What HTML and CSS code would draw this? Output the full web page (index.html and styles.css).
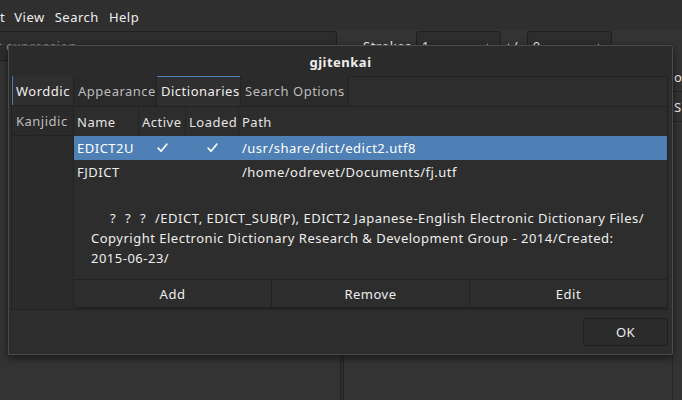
FILE: index.html
```html
<!DOCTYPE html>
<html>
<head>
<meta charset="utf-8">
<link rel="stylesheet" href="styles.css">
</head>
<body>
<div class="app">
  <div class="menubar">
    <span class="mi cut">Edit</span><span class="mi">View</span><span class="mi">Search</span><span class="mi">Help</span>
  </div>
  <div class="toolbar">
    <div class="entry">Enter expression</div>
    <div class="strokes">
      <span class="lbl">Strokes</span>
      <div class="spin"><span class="val">1</span><span class="sb">−</span><span class="sb">+</span></div>
      <span class="pm">+/-</span>
      <div class="spin"><span class="val">0</span><span class="sb">−</span><span class="sb">+</span></div>
    </div>
  </div>
  <div class="main">
    <div class="pane-left"></div>
    <div class="handle"></div>
    <div class="pane-right">
      <div class="side">
        <div class="srow">o</div>
        <div class="srow">S</div>
      </div>
    </div>
  </div>
</div>

<div class="dialog">
  <div class="titlebar">gjitenkai</div>
  <div class="dbody">
    <div class="outer">
      <div class="vtabs">
        <div class="vtab active">Worddic</div>
        <div class="vtab">Kanjidic</div>
        <div class="vfill"></div>
      </div>
      <div class="inner">
        <div class="htabs">
          <div class="htab t1">Appearance</div>
          <div class="htab t2 active">Dictionaries</div>
          <div class="htab t3">Search Options</div>
          <div class="hfill"></div>
        </div>
        <div class="page">
          <div class="thead">
            <div class="c name">Name</div>
            <div class="c act">Active</div>
            <div class="c load">Loaded</div>
            <div class="c path">Path</div>
          </div>
          <div class="trow sel">
            <div class="c name">EDICT2U</div>
            <div class="c act center"><svg class="chk" width="11" height="10" viewBox="0 0 11 10"><path d="M1.2 5.2 L4 8.2 L9.8 1.2" fill="none" stroke="#ffffff" stroke-width="1.7" stroke-linecap="round" stroke-linejoin="round"/></svg></div>
            <div class="c load center"><svg class="chk" width="11" height="10" viewBox="0 0 11 10"><path d="M1.2 5.2 L4 8.2 L9.8 1.2" fill="none" stroke="#ffffff" stroke-width="1.7" stroke-linecap="round" stroke-linejoin="round"/></svg></div>
            <div class="c path">/usr/share/dict/edict2.utf8</div>
          </div>
          <div class="trow">
            <div class="c name">FJDICT</div>
            <div class="c act"></div>
            <div class="c load"></div>
            <div class="c path">/home/odrevet/Documents/fj.utf</div>
          </div>
          <div class="desc">
            <div class="l1"><span class="q">?</span><span class="q">?</span><span class="q">?</span>/EDICT, EDICT_SUB(P), EDICT2 Japanese-English Electronic Dictionary Files/</div>
            <div>Copyright Electronic Dictionary Research &amp; Development Group - 2014/Created:</div>
            <div>2015-06-23/</div>
          </div>
          <div class="btns">
            <div class="btn">Add</div>
            <div class="btn">Remove</div>
            <div class="btn">Edit</div>
          </div>
        </div>
      </div>
    </div>
    <div class="actions">
      <div class="ok">OK</div>
    </div>
  </div>
</div>
</body>
</html>
```

FILE: styles.css
```css
* { box-sizing: border-box; }
html, body {
  margin: 0;
  padding: 0;
  width: 682px;
  height: 400px;
  overflow: hidden;
  background: #333333;
  font-family: "Noto Sans", "Open Sans", sans-serif;
  font-size: 13px;
  letter-spacing: 0.5px;
  color: #eeeeec;
}
.app {
  width: 682px;
  height: 400px;
  display: flex;
  flex-direction: column;
  overflow: hidden;
}
.menubar {
  height: 30px;
  display: flex;
  align-items: center;
  background: #2f2f2f;
  white-space: nowrap;
  padding-top: 3px;
}
.mi { padding: 0 5px; color: #eeeeec; }
.mi:nth-child(2) { padding-left: 4px; }
.mi.cut { margin-left: -25px; }
.toolbar {
  height: 32px;
  display: flex;
  align-items: flex-start;
  padding-top: 1px;
}
.entry {
  width: 379px;
  height: 30px;
  margin-left: -42px;
  padding: 0 8px;
  display: flex;
  align-items: center;
  background: #2d2d2d;
  border: 1px solid #1f1f1f;
  border-radius: 3px;
  color: #8a8a8a;
  white-space: nowrap;
}
.strokes {
  display: flex;
  align-items: center;
  margin-left: 26px;
  height: 30px;
}
.lbl { margin-right: 4px; color: #eeeeec; }
.pm { margin: 0 4px; color: #eeeeec; }
.spin {
  width: 85px;
  height: 30px;
  display: flex;
  align-items: center;
  background: #2d2d2d;
  border: 1px solid #1f1f1f;
  border-radius: 3px;
}
.spin .val { flex: 1; padding-left: 5px; }
.spin .sb { width: 24px; text-align: center; color: #bbbbbb; }
.main {
  flex: 1;
  display: flex;
}
.pane-left { width: 340px; }
.handle {
  width: 4px;
  border-left: 1px solid #242424;
  border-right: 1px solid #242424;
  background: #2e2e2e;
}
.pane-right {
  flex: 1;
  display: flex;
  justify-content: flex-end;
}
.side {
  width: 10px;
  overflow: hidden;
  margin-top: 0;
  border-left: 1px solid #262626;
}
.srow {
  height: 30px;
  padding-left: 1px;
  display: flex;
  align-items: center;
  border-bottom: 1px solid #262626;
  white-space: nowrap;
}

/* Dialog */
.dialog {
  position: absolute;
  left: 8px;
  top: 45px;
  width: 665px;
  height: 310px;
  background: #2d2d2d;
  border: 1px solid #4a4a4a;
  border-radius: 3px 3px 0 0;
  box-shadow: 0 3px 9px rgba(0, 0, 0, 0.55);
  display: flex;
  flex-direction: column;
}
.titlebar {
  height: 30px;
  display: flex;
  align-items: center;
  justify-content: center;
  font-weight: bold;
  background: #2b2b2b;
  color: #eeeeec;
  padding-top: 1px;
}
.dbody {
  flex: 1;
  display: flex;
  flex-direction: column;
  padding: 0 4px 0 2px;
}
.outer {
  height: 234px;
  display: flex;
}
.vtabs {
  width: 62px;
  display: flex;
  flex-direction: column;
  border-left: 1px solid #222222;
  border-bottom: 1px solid #222222;
}
.vtab {
  height: 30px;
  display: flex;
  align-items: center;
  padding-left: 4px;
  background: #2a2a2a;
  border-bottom: 1px solid #222222;
  color: #bdbdbd;
  white-space: nowrap;
}
.vtab.active {
  background: #2f2f2f;
  color: #eeeeec;
  box-shadow: inset 1px 0 0 #4e7fb5;
}
.vfill {
  flex: 1;
  background: #2b2b2b;
}
.inner {
  flex: 1;
  display: flex;
  flex-direction: column;
  border-left: 1px solid #222222;
}
.htabs {
  height: 31px;
  display: flex;
  border-bottom: 1px solid #222222;
}
.htab {
  display: flex;
  align-items: center;
  padding: 0 4px;
  background: #2a2a2a;
  border-right: 1px solid #222222;
  color: #bdbdbd;
  white-space: nowrap;
}
.htab.t1 { width: 83px; }
.htab.t2 { width: 84px; }
.htab.t3 { width: 108px; }
.htab.active {
  background: #2f2f2f;
  color: #eeeeec;
  box-shadow: inset 0 1px 0 #4e7fb5;
}
.hfill {
  flex: 1;
  background: #2d2d2d;
  border-top: 1px solid #222222;
  border-right: 1px solid #222222;
}
.page {
  flex: 1;
  display: flex;
  flex-direction: column;
  background: #2d2d2d;
  border-right: 1px solid #222222;
  border-bottom: 3px solid #232323;
}
.thead {
  height: 29px;
  display: flex;
  align-items: stretch;
  color: #e4e4e4;
}
.thead .c { border-right: 1px solid #252525; }
.thead .c.path { border-right: none; }
.trow {
  height: 24px;
  display: flex;
  align-items: stretch;
}
.trow.sel { background: #4e7fb5; color: #ffffff; }
.c {
  display: flex;
  align-items: center;
  padding-left: 3px;
  white-space: nowrap;
}
.c.center { justify-content: center; padding-left: 0; }
.c.name { width: 65px; }
.c.act { width: 47px; }
.c.load { width: 53px; }
.c.path { flex: 1; }
.chk { display: block; }
.desc {
  flex: 1;
  padding: 24px 0 0 17px;
  line-height: 20px;
  white-space: nowrap;
  color: #eeeeec;
}
.l1 { padding-left: 19px; }
.q { display: inline-block; width: 15px; }
.btns {
  height: 28px;
  display: flex;
  border-top: 1px solid #222222;
}
.btn {
  flex: 1;
  display: flex;
  align-items: center;
  justify-content: center;
  border-right: 1px solid #222222;
  color: #eeeeec;
}
.btn:last-child { border-right: none; }
.actions {
  flex: 1;
  display: flex;
  justify-content: flex-end;
  align-items: flex-start;
  padding-top: 8px;
}
.ok {
  width: 85px;
  height: 28px;
  display: flex;
  align-items: center;
  justify-content: center;
  border: 1px solid #1f1f1f;
  border-radius: 3px;
  background: #2b2b2b;
  color: #eeeeec;
}
```
